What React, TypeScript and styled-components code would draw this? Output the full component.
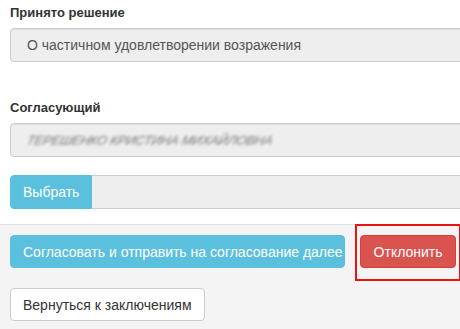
import styled, { createGlobalStyle } from "styled-components";

const GlobalStyle = createGlobalStyle`
  html, body {
    margin: 0;
    padding: 0;
    background: #fff;
    overflow: hidden;
  }
  body {
    font-family: "Liberation Sans", Arial, sans-serif;
    font-size: 14px;
    color: #333;
  }
  * {
    box-sizing: border-box;
  }
`;

const App = () => {
  return (
    <Page>
      <GlobalStyle />
      <Form>
        <Label>Принято решение</Label>
        <ReadonlyInput>О частичном удовлетворении возражения</ReadonlyInput>

        <Label $top={37}>Согласующий</Label>
        <ReadonlyInput>
          <Blurred>Терешенко Кристина Михайловна</Blurred>
        </ReadonlyInput>

        <InputGroup>
          <Button $kind="info" $flat>
            Выбрать
          </Button>
          <GroupField />
        </InputGroup>
      </Form>

      <Footer>
        <ActionRow>
          <Button $kind="info" $pad="0 1px 0 12px">
            Согласовать и отправить на согласование далее
          </Button>
          <Highlight>
            <Button $kind="danger" $pad="0 12px 0 13px">
              Отклонить
            </Button>
            <RedFrame />
          </Highlight>
          <Button $kind="success" aria-label="Согласовать" />
        </ActionRow>
        <Button $kind="default">Вернуться к заключениям</Button>
      </Footer>
    </Page>
  );
};

const Page = styled.div`
  width: 620px;
  height: 329px;
  display: flex;
  flex-direction: column;
`;

const Form = styled.div`
  display: flex;
  flex-direction: column;
  padding: 4px 0 0 10px;
`;

const Label = styled.div<{ $top?: number }>`
  font-weight: bold;
  font-size: 13px;
  line-height: 18px;
  margin-top: ${(p) => p.$top ?? 0}px;
  margin-bottom: 6px;
  color: #333;
`;

const ReadonlyInput = styled.div`
  height: 34px;
  display: flex;
  align-items: center;
  padding: 0 16px;
  background: #eee;
  border: 1px solid #ccc;
  border-radius: 4px;
  color: #555;
  font-size: 14px;
  white-space: nowrap;
  overflow: hidden;
  box-shadow: inset 0 1px 1px rgba(0, 0, 0, 0.075);
`;

const Blurred = styled.span`
  color: #777;
  font-style: italic;
  letter-spacing: -0.2px;
  text-transform: uppercase;
  font-size: 13px;
  filter: blur(1.4px);
  transform: skewX(-14deg);
  display: inline-block;
`;

const InputGroup = styled.div`
  display: flex;
  height: 34px;
  margin-top: 18px;
`;

const GroupField = styled.div`
  flex: 1;
  background: #eee;
  border: 1px solid #ccc;
  border-left: none;
  border-radius: 0 4px 4px 0;
`;

const kindColors: Record<string, { bg: string; border: string; color: string }> = {
  info: { bg: "#5bc0de", border: "#5bc0de", color: "#fff" },
  danger: { bg: "#d9534f", border: "#d43f3a", color: "#fff" },
  success: { bg: "#5cb85c", border: "#4cae4c", color: "#fff" },
  default: { bg: "#fff", border: "#ccc", color: "#333" },
};

const Button = styled.button<{ $kind: string; $flat?: boolean; $pad?: string }>`
  height: ${(p) => (p.$flat ? "34px" : "33px")};
  min-width: 12px;
  padding: ${(p) => p.$pad ?? "0 12px"};
  font-family: "Liberation Sans", Arial, sans-serif;
  font-size: 14px;
  line-height: 1;
  white-space: nowrap;
  flex-shrink: 0;
  align-self: flex-start;
  background: ${(p) => kindColors[p.$kind].bg};
  border: 1px solid ${(p) => kindColors[p.$kind].border};
  color: ${(p) => kindColors[p.$kind].color};
  border-radius: ${(p) => (p.$flat ? "4px 0 0 4px" : "4px")};
  cursor: pointer;
`;

const Footer = styled.div`
  flex: 1;
  margin-top: 15px;
  background: #f4f4f4;
  border-top: 1px solid #e3e3e3;
  padding: 10px 10px 0;
  display: flex;
  flex-direction: column;
  gap: 20px;
`;

const ActionRow = styled.div`
  display: flex;
  gap: 5px;
  & > button:first-child {
    margin-right: 10px;
  }
`;

const Highlight = styled.div`
  position: relative;
  display: flex;
`;

const RedFrame = styled.div`
  position: absolute;
  left: -5px;
  right: -5px;
  top: -11px;
  bottom: -13px;
  border: 2px solid #ee1111;
  pointer-events: none;
`;

export default App;
